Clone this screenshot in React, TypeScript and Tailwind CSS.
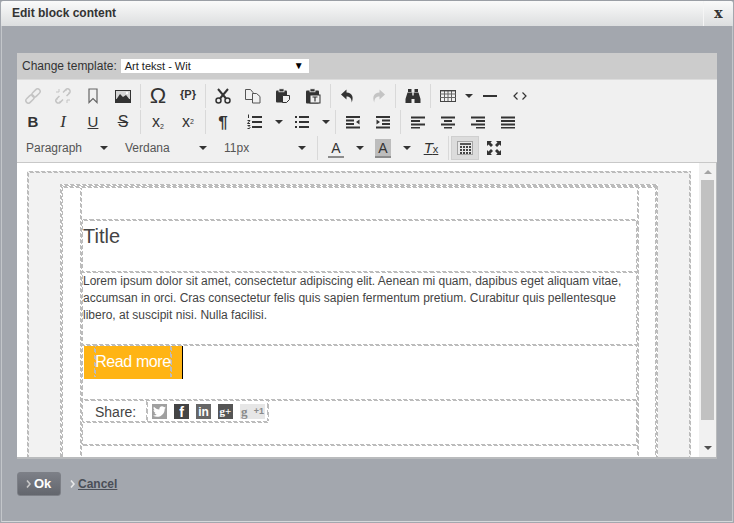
import React from "react";
import { FaTwitter } from "react-icons/fa";

const C = "#333";

function Svg({ children, w = 16, h = 16 }: { children: React.ReactNode; w?: number; h?: number }) {
  return (
    <svg width={w} height={h} viewBox={`0 0 ${w} ${h}`} className="block">
      {children}
    </svg>
  );
}

const Bars = ({ rows }: { rows: [number, number, number, number?][] }) => (
  <Svg>
    {rows.map(([x, y, w, h], i) => (
      <rect key={i} x={x} y={y} width={w} height={h ?? 2} fill={C} />
    ))}
  </Svg>
);

const LinkI = () => (
  <Svg>
    <g fill="none" stroke="#c4c4c4" strokeWidth="1.5" transform="rotate(-45 8 8)">
      <rect x="-1" y="5.5" width="9.5" height="5" rx="2.5" />
      <rect x="7.5" y="5.5" width="9.5" height="5" rx="2.5" />
    </g>
  </Svg>
);
const UnlinkI = () => (
  <Svg>
    <g fill="none" stroke="#c4c4c4" strokeWidth="1.5">
      <g transform="rotate(-45 8 8)">
        <path d="M5.5 5.5H1.5a2.5 2.5 0 0 0 0 5h4" />
        <path d="M10.5 5.5h4a2.5 2.5 0 0 1 0 5h-4" />
      </g>
      <path d="M4 1v3M1 4h3M12 15v-3M15 12h-3M11 1v2M15 5h-2M1 11h2M5 15v-2" strokeWidth="1" />
    </g>
  </Svg>
);
const BookmarkI = () => (
  <Svg>
    <path d="M4 1h8v13.500L8 10.600l-4 3.900z" fill="none" stroke="#666" strokeWidth="1.200" />
  </Svg>
);
const ImageI = () => (
  <Svg>
    <rect x="0" y="2" width="16" height="13" fill={C} />
    <rect x="1" y="3" width="14" height="8" fill="#d6d6d6" />
    <path d="M1 12l4-6 3 3 3-2 4 5v2H1z" fill={C} />
    <circle cx="12" cy="5" r="1.2" fill="#fff" />
  </Svg>
);
const ScissorsI = () => (
  <Svg>
    <g fill="none" stroke={C} strokeWidth="1.5">
      <circle cx="3.5" cy="12.5" r="2.5" />
      <circle cx="12.5" cy="12.5" r="2.5" />
    </g>
    <path d="M5 10.500L13 1M11 10.500L3 1" stroke={C} strokeWidth="2" />
  </Svg>
);
const CopyI = () => (
  <Svg>
    <g fill="#f0f0f0" stroke="#555" strokeWidth="1">
      <path d="M.5 1.500h5l2.500 3v7H.5z" />
      <path d="M7.500 5.500h4l3.500 3v6.500H7.500z" />
    </g>
  </Svg>
);
const PasteI = () => (
  <Svg>
    <rect x="1" y="2.500" width="11" height="12" rx="1" fill={C} />
    <rect x="4" y="0.800" width="5" height="3" fill={C} stroke="#f0f0f0" strokeWidth=".8" />
    <path d="M7.500 7.500h7v4l-3 3h-4z" fill="#f0f0f0" stroke={C} />
  </Svg>
);
const PasteTextI = () => (
  <Svg>
    <rect x="1" y="2.500" width="13" height="13" rx="1" fill={C} />
    <rect x="5" y="0.800" width="5" height="3" fill={C} stroke="#f0f0f0" strokeWidth=".8" />
    <rect x="5" y="7" width="10" height="8" fill="#f0f0f0" stroke={C} />
    <path d="M7.500 9h5M10 9v4.500" stroke={C} strokeWidth="1.200" />
  </Svg>
);
const UndoI = ({ color = C, flip = false }: { color?: string; flip?: boolean }) => (
  <Svg>
    <g transform={flip ? "translate(16 0) scale(-1 1)" : undefined}>
      <path d="M6.500 1.500L1 6.500l5.500 5V8.500c3 0 5 1.500 5.300 6 2-5.500.7-9.500-5.300-10z" fill={color} />
    </g>
  </Svg>
);
const BinocularsI = () => (
  <Svg>
    <path
      d="M3 1h3.500v3H3zM9.500 1H13v3H9.500zM2.500 4.500h4.800v3h1.400v-3h4.800L15.500 11v4h-6v-4H6.500v4h-6v-4z"
      fill={C}
    />
  </Svg>
);
const TableI = () => (
  <Svg>
    <rect x=".5" y="2.500" width="15" height="11" fill="none" stroke="#444" />
    <path d="M0 6h16M0 9.500h16M4.500 3v10M8 3v10M11.500 3v10" stroke="#666" strokeWidth="1" />
    <rect x=".5" y="2" width="15" height="1.400" fill="#444" />
  </Svg>
);
const HrI = () => <Bars rows={[[1, 7, 14, 2]]} />;
const CodeI = () => (
  <Svg>
    <path d="M5.500 4.500L2 8l3.500 3.500M10.500 4.500L14 8l-3.500 3.500" fill="none" stroke={C} strokeWidth="1.200" />
  </Svg>
);
const ParaI = () => <span className="text-[17px] font-bold leading-none text-[#333]">¶</span>;
const NumList = () => (
  <Svg>
    <path d="M1.500 0.500v3.500M0.500 6.500h2.500l-2.500 3h2.500M.5 11.500h2.500l-1 1 1 1-.5 1H.5" fill="none" stroke={C} />
    <rect x="5" y="2" width="10" height="2" fill={C} />
    <rect x="5" y="7" width="10" height="2" fill={C} />
    <rect x="5" y="12" width="10" height="2" fill={C} />
  </Svg>
);
const BulList = () => (
  <Bars
    rows={[
      [1, 2, 2],
      [5, 2, 10],
      [1, 7, 2],
      [5, 7, 10],
      [1, 12, 2],
      [5, 12, 10],
    ]}
  />
);
const Outdent = () => (
  <Svg>
    <rect x="1" y="2" width="14" height="2" fill={C} />
    <rect x="1" y="5.500" width="8" height="2" fill={C} />
    <rect x="1" y="9" width="8" height="2" fill={C} />
    <rect x="1" y="12.500" width="14" height="2" fill={C} />
    <path d="M14.500 5.500v5l-3.500-2.500z" fill={C} />
  </Svg>
);
const Indent = () => (
  <Svg>
    <rect x="1" y="2" width="14" height="2" fill={C} />
    <rect x="7" y="5.500" width="8" height="2" fill={C} />
    <rect x="7" y="9" width="8" height="2" fill={C} />
    <rect x="1" y="12.500" width="14" height="2" fill={C} />
    <path d="M1.500 5.500v5L5 8z" fill={C} />
  </Svg>
);
const aligns: Record<string, [number, number, number, number][]> = {
  left: [[1, 2.500, 14, 2], [1, 6, 9, 2], [1, 9.500, 14, 2], [1, 13, 9, 1.500]],
  center: [[1, 2.500, 14, 2], [4, 6, 8, 2], [1, 9.500, 14, 2], [4, 13, 8, 1.500]],
  right: [[1, 2.500, 14, 2], [6, 6, 9, 2], [1, 9.500, 14, 2], [6, 13, 9, 1.500]],
  full: [[1, 2.500, 14, 2], [1, 6, 14, 2], [1, 9.500, 14, 2], [1, 13, 14, 1.500]],
};
const VisualI = () => (
  <Svg>
    <rect x=".5" y="1.500" width="15" height="13" fill="#e8e8e8" stroke="#666" strokeDasharray="1 1" />
    <rect x="3" y="3" width="11" height="2" fill="#555" />
    <g fill="#444">
      {[3, 6, 9, 12].map((x) =>
        [6, 9, 12].map((y) => <rect key={`${x}-${y}`} x={x} y={y} width="2" height="2" />),
      )}
    </g>
  </Svg>
);
const FullI = () => (
  <Svg>
    <path
      d="M1 1h5L4.500 2.500 7 5 5 7 2.500 4.500 1 6zM15 1v5l-1.500-1.500L11 7 9 5l2.500-2.500L10 1zM1 15v-5l1.500 1.500L5 9l2 2-2.500 2.500L6 15zM15 15h-5l1.500-1.500L9 11l2-2 2.500 2.500L15 10z"
      fill={C}
    />
  </Svg>
);

const Chevron = ({ color }: { color: string }) => (
  <svg width="5" height="8" viewBox="0 0 5 8" className="block">
    <path d="M1 .5L4 4 1 7.500" fill="none" stroke={color} strokeWidth="1.600" />
  </svg>
);

const Caret = () => (
  <span className="block w-0 h-0 border-x-[4px] border-t-[4px] border-x-transparent border-t-[#333]" />
);
const Sep = () => <span className="block w-px h-6 bg-[#d9d9d9] mx-[2px]" />;

function Btn({ children, className = "w-[30px]" }: { children: React.ReactNode; className?: string }) {
  return <span className={`flex items-center justify-center h-6 ${className}`}>{children}</span>;
}

function Split({ children, iconW, arrowW }: { children: React.ReactNode; iconW: string; arrowW: string }) {
  return (
    <span className="flex items-center h-6">
      <span className={`flex justify-center ${iconW}`}>{children}</span>
      <span className={`flex justify-center ${arrowW}`}>
        <Caret />
      </span>
    </span>
  );
}

function Combo({ label }: { label: string }) {
  return (
    <span className="flex items-center h-6 w-[99px] pl-2 text-[12px] text-[#555]">
      <span className="w-[74px]">{label}</span>
      <Caret />
    </span>
  );
}

const ColorA = ({ bg = false }: { bg?: boolean }) => (
  <span className="flex flex-col items-center w-4">
    <span
      className={`block w-4 h-[17px] text-center text-[14px] leading-[18px] font-medium text-[#333] ${
        bg ? "bg-[#bdbdbd]" : ""
      }`}
    >
      A
    </span>
    <span className="block w-4 h-[2px] bg-[#8c8c8c]" />
  </span>
);

function Toolbar() {
  return (
    <div className="h-[82px] bg-[#f0f0f0] pt-1 pl-px flex flex-col gap-[2px]">
      <div className="flex items-center h-6">
        <Btn><LinkI /></Btn>
        <Btn><UnlinkI /></Btn>
        <Btn><BookmarkI /></Btn>
        <Btn><ImageI /></Btn>
        <Sep />
        <Btn>
          <span className="text-[22px] leading-none text-[#333]">Ω</span>
        </Btn>
        <Btn>
          <span className="text-[11px] font-bold leading-none text-[#333] mb-1">{"{P}"}</span>
        </Btn>
        <Sep />
        <Btn><ScissorsI /></Btn>
        <Btn><CopyI /></Btn>
        <Btn><PasteI /></Btn>
        <Btn><PasteTextI /></Btn>
        <Sep />
        <Btn><UndoI /></Btn>
        <Btn><UndoI color="#c4c4c4" flip /></Btn>
        <Sep />
        <Btn><BinocularsI /></Btn>
        <Sep />
        <Split iconW="w-[30px]" arrowW="w-[12px]"><TableI /></Split>
        <Btn><HrI /></Btn>
        <Btn><CodeI /></Btn>
      </div>
      <div className="flex items-center h-6">
        <Btn><span className="text-[15px] font-bold text-[#333]">B</span></Btn>
        <Btn><span className="text-[17px] italic text-[#333] font-['Liberation_Serif',serif]">I</span></Btn>
        <Btn><span className="text-[15px] underline text-[#333]">U</span></Btn>
        <Btn><span className="text-[16px] line-through text-[#333]">S</span></Btn>
        <Sep />
        <Btn>
          <span className="text-[16px] text-[#333]">x<sub className="text-[7px]">2</sub></span>
        </Btn>
        <Btn>
          <span className="text-[16px] text-[#333]">x<sup className="text-[7px]">2</sup></span>
        </Btn>
        <Sep />
        <Btn><ParaI /></Btn>
        <Split iconW="w-[34px]" arrowW="w-[13px]"><NumList /></Split>
        <Split iconW="w-[34px]" arrowW="w-[14px]"><BulList /></Split>
        <Sep />
        <Btn><Outdent /></Btn>
        <Btn><Indent /></Btn>
        <Sep />
        <Btn><Bars rows={aligns.left} /></Btn>
        <Btn><Bars rows={aligns.center} /></Btn>
        <Btn><Bars rows={aligns.right} /></Btn>
        <Btn><Bars rows={aligns.full} /></Btn>
      </div>
      <div className="flex items-center h-6">
        <Combo label="Paragraph" />
        <Combo label="Verdana" />
        <Combo label="11px" />
        <Sep />
        <Split iconW="w-[32px]" arrowW="w-[16px]"><ColorA /></Split>
        <Split iconW="w-[30px]" arrowW="w-[18px]"><ColorA bg /></Split>
        <Btn>
          <span className="text-[15px] italic underline text-[#333]">T<span className="text-[11px] not-italic">x</span></span>
        </Btn>
        <Sep />
        <span className="flex items-center justify-center w-[28px] h-6 bg-[#dcdcdc] border border-[#cfcfcf]">
          <VisualI />
        </span>
        <Btn><FullI /></Btn>
      </div>
    </div>
  );
}

const Social = ({ className, children }: { className: string; children: React.ReactNode }) => (
  <span
    className={`flex items-center justify-center w-[15px] h-[15px] text-white font-bold leading-none ${className}`}
  >
    {children}
  </span>
);

// 2px dashes about 4 on, 2 off, as the reference's dashed table guides
const dash =
  "border-solid [border-image:repeating-linear-gradient(45deg,#bcbcbc_0_2.83px,transparent_2.83px_4.24px)_2]";

function EditorBody() {
  return (
    <div className={`w-[664px] ml-[10px] mt-2 border-2 ${dash} bg-[#f2f2f2] pt-[11px] pl-[31px] h-[400px]`}>
      <div className={`w-[598px] border-2 ${dash} bg-white h-[380px]`}>
        <div className={`w-[594px] h-full border-t-2 border-x ${dash} pl-[17px] pr-[16px]`}>
          <div className={`h-full border-l-2 border-r-2 ${dash} text-[#444]`}>
            <div className="h-[31px]" />
            <div className={`h-[52px] border-t-2 border-x ${dash} text-[20px] leading-[26px] pt-[2px]`}>Title</div>
            <div className={`h-[73px] border-t-2 border-x ${dash} text-[12px] leading-[17px]`}>
              Lorem ipsum dolor sit amet, consectetur adipiscing elit. Aenean mi quam, dapibus eget aliquam vitae,
              accumsan in orci. Cras consectetur felis quis sapien fermentum pretium. Curabitur quis pellentesque
              libero, at suscipit nisi. Nulla facilisi.
            </div>
            <div className={`h-[55px] border-t-2 border-x ${dash} pl-[1px]`}>
              <div className="flex h-[33px] w-[99px] border-r border-r-black bg-[#ffb414] pl-[10px]">
                <span className={`flex items-center justify-center w-[78px] h-[31px] border-x-2 ${dash} text-[16px] tracking-[-0.4px] text-white whitespace-nowrap`}>
                  Read more
                </span>
              </div>
            </div>
            <div className={`h-[45px] border-t-2 border-x ${dash}`}>
              <div className={`flex w-[186px] h-[22px] border-b-2 ${dash}`}>
                <span className={`w-[65px] pl-[12px] text-[14px] leading-[22px] border-r-2 ${dash}`}>Share:</span>
                <span className={`flex gap-[7px] pl-[4px] pt-[3px] w-[121px] border-r-2 ${dash}`}>
                  <Social className="bg-[#a0a0a0]">
                    <FaTwitter className="w-[13px] h-[13px]" />
                  </Social>
                  <Social className="bg-[#444] text-[14px]">f</Social>
                  <Social className="bg-[#666] text-[12px]">in</Social>
                  <Social className="bg-[#555] text-[11px] font-['Liberation_Serif',serif]">g+</Social>
                  <span className="flex items-center justify-between w-[25px] h-[15px] px-[1px] bg-[#e6e6e6] text-[#8a8a8a] text-[9px] font-bold leading-none">
                    <span className="text-[13px] font-['Liberation_Serif',serif]">g</span>+1
                  </span>
                </span>
              </div>
            </div>
            <div className={`h-[40px] border-t-2 ${dash}`} />
          </div>
        </div>
      </div>
    </div>
  );
}

export default function App() {
  return (
    <div className="w-[734px] h-[523px] bg-[#a3a7ae] font-['Liberation_Sans',sans-serif] overflow-hidden flex flex-col border-t border-t-[#9a9ea5]">
      <div className="flex items-stretch h-[25px] shrink-0 mx-px bg-gradient-to-b from-[#fafafa] to-[#dcdedf] rounded-t-[2px]">
        <div className="flex-1 pl-[11px] text-[12px] font-bold leading-[24px] text-[#333]">Edit block content</div>
        <div className="w-[30px] border-l border-l-[#f5f5f5] text-center text-[14px] font-bold leading-[24px] text-[#333] font-['DejaVu_Serif',serif]">
          x
        </div>
      </div>
      <div className="flex-1 mx-px mb-px border-x border-b border-x-[#c3c6ca] border-b-[#d6d8da] flex flex-col">
        <div className="ml-[15px] mt-[27px] w-[700px] flex flex-col">
          <div className="flex items-center h-[27px] bg-[#cccccc] pl-[5px] border-b border-b-[#dcdcdc]">
            <span className="text-[12px] text-[#333] mr-[4px]">Change template:</span>
            <span className="flex items-center justify-between w-[188px] h-[14px] bg-white pl-1 pr-[5px] text-[11px] leading-[14px] text-[#222]">
              Art tekst - Wit
              <span className="text-[10px] leading-none text-black">▼</span>
            </span>
          </div>
          <Toolbar />
          <div className="flex h-[297px] border-t border-t-[#c8c8c8] border-b-2 border-b-[#b9bbbd] bg-white border-r border-r-[#b9bbbd]">
            <div className="flex-1 overflow-hidden">
              <EditorBody />
            </div>
            <div className="w-[17px] bg-[#f1f1f1] flex flex-col items-center pt-[7px]">
              <span className="block w-0 h-0 border-x-[4px] border-b-[4px] border-x-transparent border-b-[#a3a3a3]" />
              <span className="block w-[13px] h-[240px] mt-[6px] bg-[#c1c1c1]" />
              <span className="block w-0 h-0 mt-[26px] border-x-[4px] border-t-[4px] border-x-transparent border-t-[#505050]" />
            </div>
          </div>
        </div>
        <div className="flex items-center ml-[15px] mt-[13px]">
          <span className="flex items-center w-[44px] h-6 pl-[8px] gap-[3px] rounded-[3px] border border-[#7d8087] bg-gradient-to-b from-[#7c7f87] to-[#63666d] text-[13px] font-bold text-white">
            <Chevron color="#c8c8c8" />
            Ok
          </span>
          <span className="flex items-center gap-[3px] ml-[9px] text-[12px] font-bold text-[#4b4f58]">
            <Chevron color="#e8e8e8" />
            <span className="underline">Cancel</span>
          </span>
        </div>
      </div>
    </div>
  );
}
